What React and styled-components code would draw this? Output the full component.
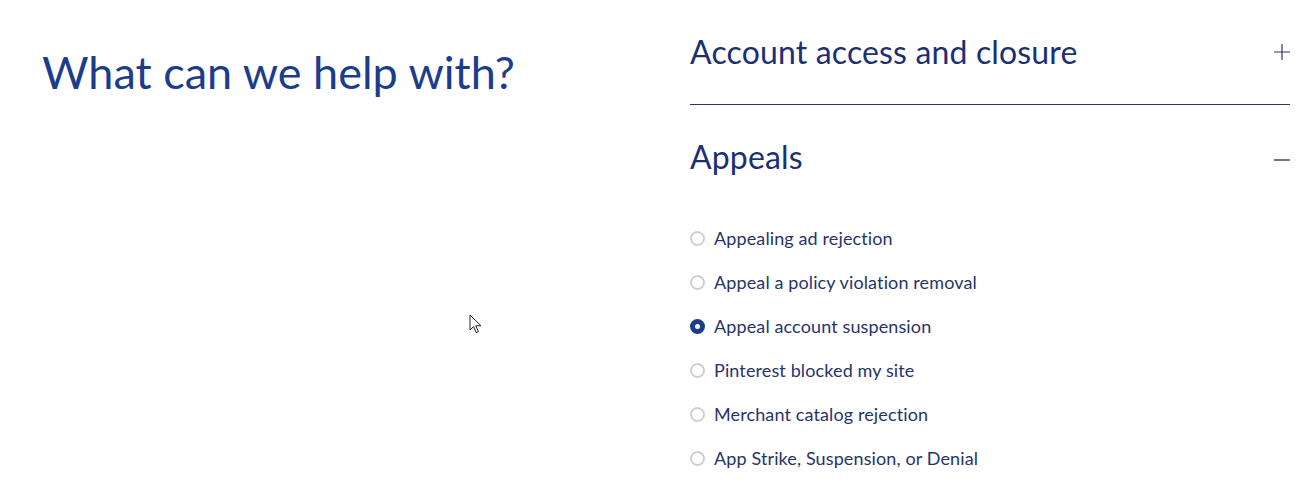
import React, { useState } from "react";
import styled, { createGlobalStyle } from "styled-components";

const GlobalStyle = createGlobalStyle`
  body {
    margin: 0;
    background: #ffffff;
    font-family: "Lato", "Liberation Sans", sans-serif;
  }
`;

const Page = styled.div`
  position: relative;
  display: flex;
  padding-left: 42px;
  height: 500px;
  overflow: hidden;
`;

const Intro = styled.div`
  width: 648px;
  flex-shrink: 0;
  padding-top: 44px;
`;

const Heading = styled.h1`
  margin: 0;
  font-size: 45px;
  line-height: 56px;
  font-weight: 400;
  color: #1b3d8c;
`;

const Topics = styled.div`
  width: 600px;
  display: flex;
  flex-direction: column;
`;

const Item = styled.div`
  border-bottom: ${(p) => (p.$divider ? "1px solid #2a3570" : "none")};
`;

const Header = styled.button`
  width: 100%;
  height: 104px;
  display: flex;
  align-items: center;
  justify-content: space-between;
  padding: 0;
  border: none;
  background: none;
  cursor: pointer;
  font-family: inherit;
  font-size: 32px;
  line-height: 40px;
  letter-spacing: 0.15px;
  font-weight: 400;
  color: #1c2f74;
  text-align: left;
`;

const Toggle = styled.svg`
  width: 18px;
  height: 18px;
  margin-right: -1px;
  flex-shrink: 0;
`;

const Panel = styled.div`
  padding-top: 7px;
  display: flex;
  flex-direction: column;
`;

const Option = styled.label`
  height: 44px;
  display: flex;
  align-items: center;
  gap: 9px;
  font-size: 18px;
  letter-spacing: 0.12px;
  color: #27346c;
  cursor: pointer;
`;

const Radio = styled.span`
  width: 15px;
  height: 15px;
  box-sizing: border-box;
  border-radius: 50%;
  flex-shrink: 0;
  display: flex;
  align-items: center;
  justify-content: center;
  border: ${(p) => (p.$checked ? "none" : "2px solid #d0d0d0")};
  background: ${(p) => (p.$checked ? "#1b3d8c" : "#ffffff")};

  &::after {
    content: "";
    width: 5px;
    height: 5px;
    border-radius: 50%;
    background: #ffffff;
    display: ${(p) => (p.$checked ? "block" : "none")};
  }
`;

const Cursor = styled.svg`
  position: absolute;
  left: 469px;
  top: 314px;
  width: 14px;
  height: 20px;
`;

const appeals = [
  "Appealing ad rejection",
  "Appeal a policy violation removal",
  "Appeal account suspension",
  "Pinterest blocked my site",
  "Merchant catalog rejection",
  "App Strike, Suspension, or Denial",
];

const PlusIcon = () => (
  <Toggle viewBox="0 0 18 18">
    <path d="M9 1v16M1 9h16" stroke="#2a3570" strokeWidth="1.2" fill="none" />
  </Toggle>
);

const MinusIcon = () => (
  <Toggle viewBox="0 0 18 18">
    <path d="M1 12h16" stroke="#2a3570" strokeWidth="1.4" fill="none" />
  </Toggle>
);

const App = () => {
  const [selected, setSelected] = useState(2);
  return (
    <>
      <GlobalStyle />
      <Page>
        <Intro>
          <Heading>What can we help with?</Heading>
        </Intro>
        <Topics>
          <Item $divider>
            <Header>
              <span>Account access and closure</span>
              <PlusIcon />
            </Header>
          </Item>
          <Item>
            <Header>
              <span>Appeals</span>
              <MinusIcon />
            </Header>
            <Panel>
              {appeals.map((label, i) => (
                <Option key={label} onClick={() => setSelected(i)}>
                  <Radio $checked={selected === i} />
                  {label}
                </Option>
              ))}
            </Panel>
          </Item>
        </Topics>
        <Cursor viewBox="0 0 14 20">
          <path
            d="M1 1v15l3.6-3.4 2.6 6 2.2-1-2.6-5.8H12z"
            fill="#ffffff"
            stroke="#222"
            strokeWidth="1"
            strokeLinejoin="round"
          />
        </Cursor>
      </Page>
    </>
  );
};

export default App;
